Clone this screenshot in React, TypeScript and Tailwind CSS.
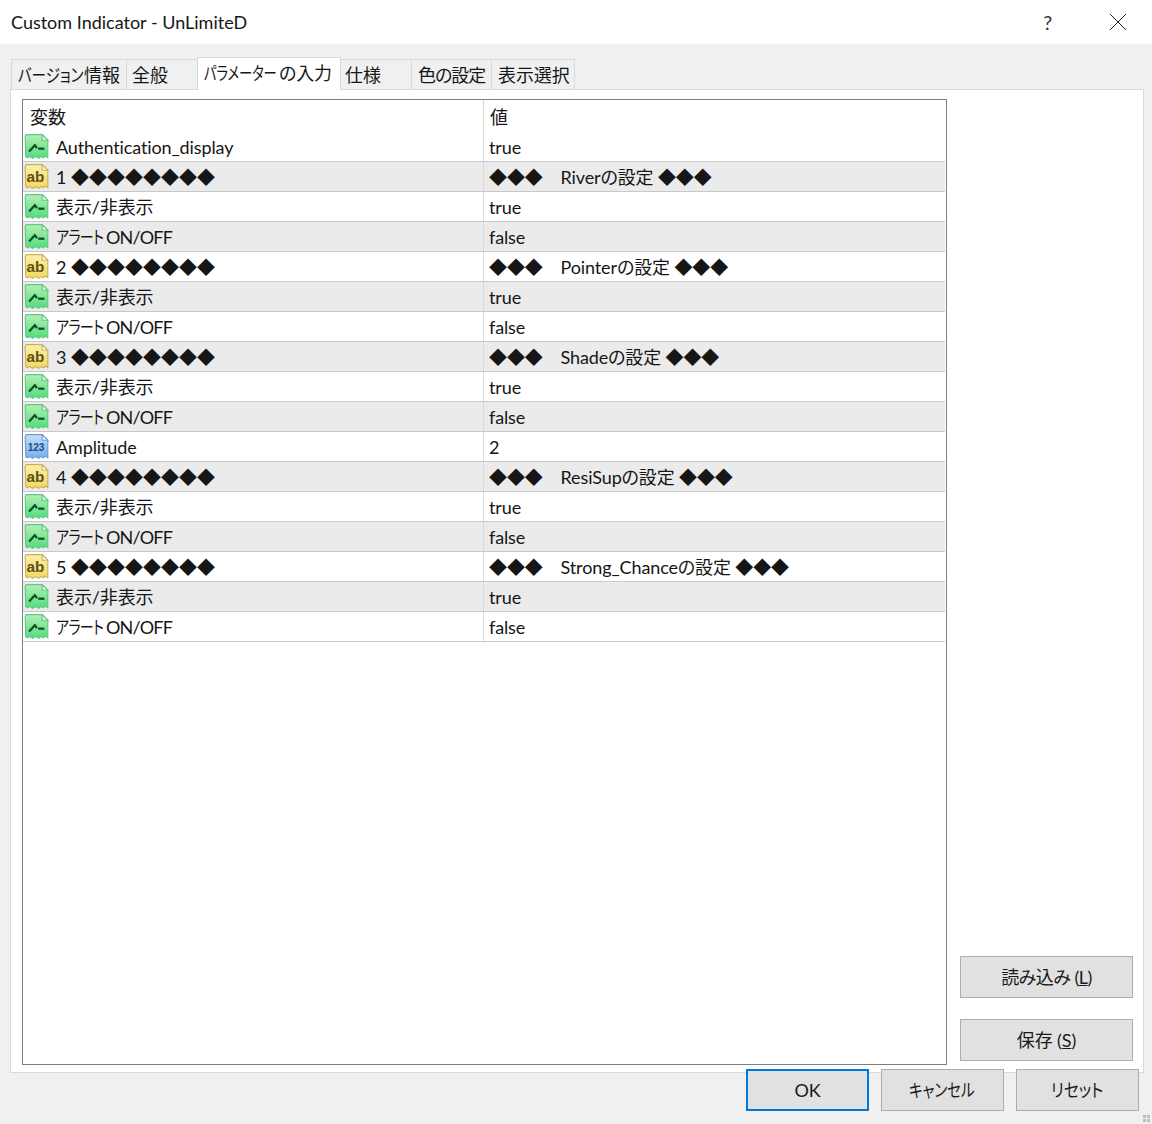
const rows = [
  { icon: "bool", name: "Authentication_display", value: "true" },
  { icon: "ab", name: "1 ◆◆◆◆◆◆◆◆", value: "◆◆◆　Riverの設定 ◆◆◆" },
  { icon: "bool", name: "表示/非表示", value: "true" },
  { icon: "bool", name: "ON/OFF", alert: true, value: "false" },
  { icon: "ab", name: "2 ◆◆◆◆◆◆◆◆", value: "◆◆◆　Pointerの設定 ◆◆◆" },
  { icon: "bool", name: "表示/非表示", value: "true" },
  { icon: "bool", name: "ON/OFF", alert: true, value: "false" },
  { icon: "ab", name: "3 ◆◆◆◆◆◆◆◆", value: "◆◆◆　Shadeの設定 ◆◆◆" },
  { icon: "bool", name: "表示/非表示", value: "true" },
  { icon: "bool", name: "ON/OFF", alert: true, value: "false" },
  { icon: "num", name: "Amplitude", value: "2" },
  { icon: "ab", name: "4 ◆◆◆◆◆◆◆◆", value: "◆◆◆　ResiSupの設定 ◆◆◆" },
  { icon: "bool", name: "表示/非表示", value: "true" },
  { icon: "bool", name: "ON/OFF", alert: true, value: "false" },
  { icon: "ab", name: "5 ◆◆◆◆◆◆◆◆", value: "◆◆◆　Strong_Chanceの設定 ◆◆◆" },
  { icon: "bool", name: "表示/非表示", value: "true" },
  { icon: "bool", name: "ON/OFF", alert: true, value: "false" },
];

const palette: Record<string, { top: string; bottom: string; line: string; fold: string }> = {
  bool: { top: "#b4f0b4", bottom: "#52dc7c", line: "#62c884", fold: "#e4fae4" },
  ab: { top: "#fbf0a8", bottom: "#f2d860", line: "#c8b062", fold: "#fffbe0" },
  num: { top: "#c4e0fa", bottom: "#74b0ec", line: "#6a9ccc", fold: "#eaf4fe" },
};

function TypeIcon({ type }: { type: string }) {
  const c = palette[type];
  return (
    <svg width="25" height="26" viewBox="3 1 21 23" className="shrink-0">
      <defs>
        <linearGradient id={`grad-${type}`} x1="0" y1="0" x2="0" y2="1">
          <stop offset="0" stopColor={c.top} />
          <stop offset="1" stopColor={c.bottom} />
        </linearGradient>
      </defs>
      <path
        d="M3.5 3a1.500 1.500 0 0 1 1.500-1.500h13.500l5 5v15.500l-2-1.500-2 1.500-2-1-2 1.500-3-1.500-2.500 1.500-2.500-1.500-2 1-1.500-1z"
        fill={`url(#grad-${type})`}
        stroke={c.line}
        strokeWidth="1"
      />
      <path d="M18.500 1.500v5h5z" fill={c.fold} stroke={c.line} strokeWidth="1" />
      {type === "bool" && (
        <g fill="none" stroke="#0f4d28" strokeWidth="2">
          <path d="M7 16.500l5-5.500 2 2.500" />
          <path d="M15 14h5.500" />
        </g>
      )}
      {type === "ab" && (
        <text x="12.500" y="17" textAnchor="middle" fontSize="13.500" fontWeight="700" fill="#5f5018" fontFamily="'Liberation Sans', sans-serif">
          ab
        </text>
      )}
      {type === "num" && (
        <text x="13" y="16" textAnchor="middle" fontSize="9" fontWeight="700" fill="#1f4f86" fontFamily="'Liberation Sans', sans-serif">
          123
        </text>
      )}
    </svg>
  );
}

function Btn({ children, className }: { children: React.ReactNode; className: string }) {
  return (
    <button className={`h-[42px] bg-[#e1e1e1] text-[18px] text-[#1a1a1a] flex items-center justify-center ${className}`}>
      {children}
    </button>
  );
}

function Tab({ className, children }: { className: string; children: React.ReactNode }) {
  return (
    <div className={`${className} h-[30px] bg-[#f0f0f0] border border-b-0 border-[#d9d9d9] -ml-px leading-[30px] whitespace-nowrap`}>
      {children}
    </div>
  );
}

export default function App() {
  return (
    <div
      className="relative w-[1152px] h-[1124px] bg-[#f0f0f0] overflow-hidden text-[18px] text-[#161616] flex flex-col tracking-[-0.120px] [font-feature-settings:'palt']"
      style={{ fontFamily: "Lato, 'Noto Sans CJK JP', sans-serif" }}
    >
      {/* title bar */}
      <div className="h-[44px] bg-white flex items-center pl-[11px] shrink-0">
        <span className="tracking-normal">Custom Indicator - UnLimiteD</span>
        <span className="ml-auto text-[20px] text-[#333] mr-[57px]">?</span>
        <svg width="18" height="18" viewBox="0 0 18 18" className="mr-[25px]">
          <path d="M1 1l16 16M17 1L1 17" stroke="#222" strokeWidth="1" fill="none" />
        </svg>
      </div>

      {/* tabs, the kana is squeezed with scale since noto kana is wider than the original font */}
      <div className="h-[45px] flex items-end pl-[12px] shrink-0">
        <Tab className="w-[116px] pl-[6px]">
          <span className="inline-block w-[66px] origin-left scale-x-[0.81]">バージョン</span>情報
        </Tab>
        <Tab className="w-[72px] pl-[5px]">全般</Tab>
        <div className="w-[144px] h-[33px] -mb-px -ml-px relative z-10 bg-white border border-b-0 border-[#d9d9d9] pl-[6px] leading-[31px] whitespace-nowrap">
          <span className="inline-block w-[75px] origin-left scale-x-[0.74]">パラメーター</span>の入力
        </div>
        <Tab className="w-[72px] pl-[4px]">仕様</Tab>
        <Tab className="w-[81px] pl-[6px] tracking-[-1px]">色の設定</Tab>
        <Tab className="w-[84px] pl-[6px]">表示選択</Tab>
      </div>

      {/* panel */}
      <div className="ml-[10px] w-[1134px] h-[984px] shrink-0 bg-white border border-[#d9d9d9] pl-[11px] pt-[9px] flex">
        <div className="w-[925px] h-[966px] border border-[#7f7f7f] bg-white flex flex-col shrink-0">
          <div className="h-[32px] flex shrink-0">
            <div className="w-[461px] pl-[7px] border-r border-[#d9d9d9] leading-[34px]">変数</div>
            <div className="pl-[6px] leading-[34px]">値</div>
          </div>
          {rows.map((r, i) => (
            <div key={i} className={`h-[30px] flex shrink-0 border-b border-[#c9c9c9] mr-px ${i % 2 === 1 ? "bg-[#ebebeb]" : "bg-white"}`}>
              <div className="w-[461px] flex items-center pl-[1px] border-r border-[#d9d9d9] gap-[7px] whitespace-nowrap">
                <TypeIcon type={r.icon} />
                <span className={`pt-[2px] ${r.icon === "ab" ? "tracking-normal" : ""} ${r.alert ? "tracking-[-0.800px]" : ""}`}>
                  {r.alert && <span className="inline-block w-[50px] origin-left scale-x-[0.78]">アラート</span>}
                  {r.name}
                </span>
              </div>
              <div className="pl-[5px] pt-[2px] flex items-center whitespace-nowrap">{r.value}</div>
            </div>
          ))}
        </div>
        <div className="w-[173px] ml-[13px] h-[966px] flex flex-col justify-end gap-[21px] pb-[4px] shrink-0">
          <Btn className="w-full border border-[#adadad] tracking-[-0.500px]">
            読み込み (<span className="underline">L</span>)
          </Btn>
          <Btn className="w-full border border-[#adadad]">
            保存 (<span className="underline">S</span>)
          </Btn>
        </div>
      </div>

      {/* bottom buttons */}
      <div className="-mt-[4px] relative flex justify-end gap-[12px] pr-[13px]">
        <Btn className="w-[123px] border-2 border-[#0078d7]">OK</Btn>
        <Btn className="w-[123px] border border-[#adadad]">
          <span className="inline-block w-[68px] origin-left scale-x-[0.81] whitespace-nowrap">キャンセル</span>
        </Btn>
        <Btn className="w-[123px] border border-[#adadad]">
          <span className="inline-block w-[53px] origin-left scale-x-[0.88] whitespace-nowrap">リセット</span>
        </Btn>
      </div>

      {/* resize grip */}
      <div className="absolute right-[2px] bottom-[2px] grid grid-cols-2 gap-px">
        <div className="w-[3px] h-[3px] bg-[#bdbdbd]" />
        <div className="w-[3px] h-[3px] bg-[#bdbdbd]" />
        <div className="w-[3px] h-[3px] bg-[#bdbdbd]" />
        <div className="w-[3px] h-[3px] bg-[#bdbdbd]" />
      </div>
    </div>
  );
}
